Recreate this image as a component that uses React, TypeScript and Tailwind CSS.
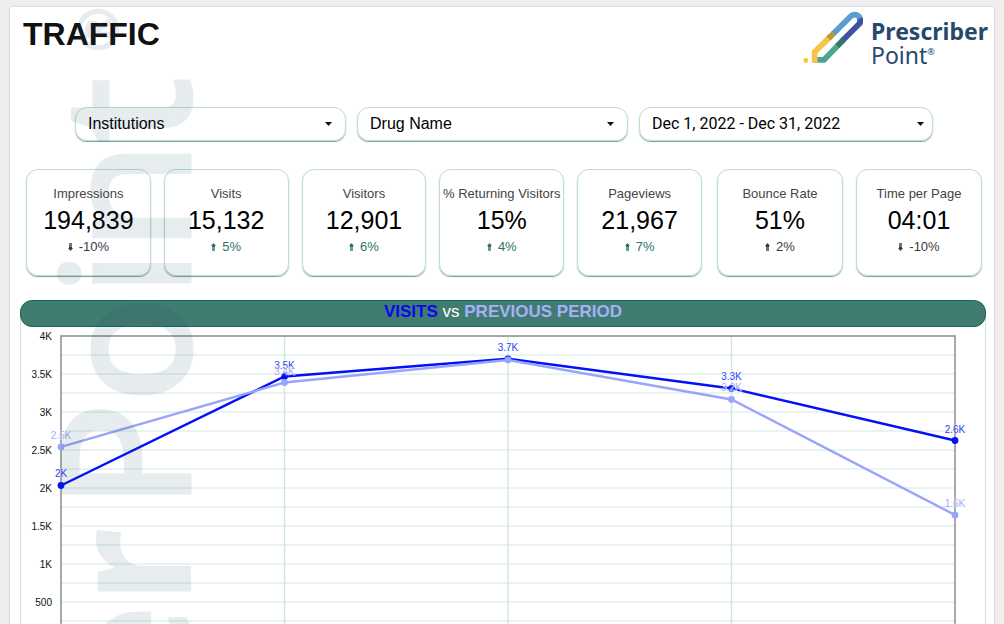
const metrics = [
  { label: "Impressions", value: "194,839", change: "-10%", up: false, good: false },
  { label: "Visits", value: "15,132", change: "5%", up: true, good: true },
  { label: "Visitors", value: "12,901", change: "6%", up: true, good: true },
  { label: "% Returning Visitors", value: "15%", change: "4%", up: true, good: true },
  { label: "Pageviews", value: "21,967", change: "7%", up: true, good: true },
  { label: "Bounce Rate", value: "51%", change: "2%", up: true, good: false },
  { label: "Time per Page", value: "04:01", change: "-10%", up: false, good: false },
];

const visits = [
  { value: 2033, label: "2K" },
  { value: 3467, label: "3.5K" },
  { value: 3700, label: "3.7K" },
  { value: 3310, label: "3.3K" },
  { value: 2625, label: "2.6K" },
];

const previous = [
  { value: 2540, label: "2.5K" },
  { value: 3388, label: "3.4K" },
  { value: 3685, label: "" },
  { value: 3165, label: "3.2K" },
  { value: 1645, label: "1.6K" },
];

const ticks = ["4K", "3.5K", "3K", "2.5K", "2K", "1.5K", "1K", "500", "0"];

// plot area inside the chart svg
const LEFT = 40;
const RIGHT = 934;
const TOP = 9;
const BOTTOM = 313;
const STEP = (RIGHT - LEFT) / 4;

const getX = (i: number) => LEFT + i * STEP;
const getY = (value: number) => BOTTOM - (value / 4000) * (BOTTOM - TOP);

type Point = { value: number; label: string };

const Series = ({ points, color, textColor }: { points: Point[]; color: string; textColor: string }) => (
  <g>
    <polyline
      points={points.map((p, i) => `${getX(i)},${getY(p.value)}`).join(" ")}
      fill="none"
      stroke={color}
      strokeWidth={2.4}
    />
    {points.map((p, i) => (
      <g key={i}>
        <circle cx={getX(i)} cy={getY(p.value)} r={3.4} fill={color} />
        <text
          x={getX(i)}
          y={getY(p.value) - 8}
          textAnchor="middle"
          fill={textColor}
          stroke="#ffffff"
          strokeOpacity={0.5}
          strokeWidth={1.2}
          paintOrder="stroke"
        >
          {p.label}
        </text>
      </g>
    ))}
  </g>
);

const Chart = () => (
  <svg
    viewBox="0 0 964 330"
    className="block w-full h-auto font-['Liberation_Sans',sans-serif] text-[10px]"
    role="img"
    aria-label="Visits vs previous period"
  >
    {Array.from({ length: 17 }, (_, i) => (
      <line key={i} x1={LEFT} x2={RIGHT} y1={TOP + i * 19} y2={TOP + i * 19} stroke="#dff0ec" strokeWidth={1.6} />
    ))}
    {[1, 2, 3].map((i) => (
      <line key={i} x1={getX(i)} x2={getX(i)} y1={TOP} y2={BOTTOM} stroke="#cfe5e0" strokeWidth={1.3} />
    ))}
    <rect x={LEFT} y={TOP} width={RIGHT - LEFT} height={BOTTOM - TOP} fill="none" stroke="#8a8f8e" strokeWidth={1.5} />
    {ticks.map((tick, i) => (
      <text key={tick} x={31} y={TOP + i * 38 + 4} textAnchor="end" fill="#111111">
        {tick}
      </text>
    ))}
    <Series points={visits} color="#0310fa" textColor="#2f43f2" />
    <Series points={previous} color="#98a5fb" textColor="#a3adf7" />
  </svg>
);

const Logo = () => (
  <div className="flex gap-2 text-[#26496a]">
    <svg className="w-[61px] h-[54px] shrink-0" viewBox="802 11 61 54" fill="none" strokeWidth={5.8}>
      <circle cx="805.8" cy="60.5" r="2.4" fill="#f5c63c" />
      <path d="M833 34L850.5 16.5A5.6 5.6 0 0 1 858.8 24.2" stroke="#5b9dcb" />
      <path d="M860 18.5C860.9 21 860.3 23 858.8 24.3L842.3 40.8" stroke="#3b55a2" />
      <path d="M813.5 59.9H824L838.3 45" stroke="#4aa592" />
      <path d="M837.3 46L843.3 39.9" stroke="#347866" />
      <path d="M814.7 62.7V52L829.5 37.4" stroke="#f3c54b" />
      <path d="M828.5 38.4L833.8 33.2" stroke="#b5983f" />
    </svg>
    <div className="font-['Noto_Sans',sans-serif] text-[23px] leading-6 pt-2">
      <div className="font-bold">Prescriber</div>
      <div className="flex">
        Point<span className="text-[9px] leading-[18px]">®</span>
      </div>
    </div>
  </div>
);

const Arrow = ({ up }: { up: boolean }) => (
  <svg className={up ? "w-[5px] h-2" : "w-[5px] h-2 rotate-180"} viewBox="0 0 5 8" fill="currentColor">
    <path d="M2.5 0L5 3H4V4H1V3H0Z" />
    <path d="M1 4H4V8H1Z" opacity={0.7} />
  </svg>
);

const MetricCard = ({ label, value, change, up, good }: (typeof metrics)[number]) => (
  <div className="h-[107px] pt-4 flex flex-col items-center whitespace-nowrap border border-[#bcdcd6] rounded-xl shadow-[0_1px_1px_#7d9f99]">
    <div className="text-[13px] leading-4 text-[#444444]">{label}</div>
    <div className="text-[25px] leading-[37px] text-black">{value}</div>
    <div className={`flex items-center gap-1.5 text-[13px] leading-4 ${good ? "text-[#2b7365]" : "text-[#3a3a3a]"}`}>
      <Arrow up={up} />
      {change}
    </div>
  </div>
);

const Caret = () => (
  <svg className="w-[7px] h-1" viewBox="0 0 7 4">
    <path d="M0 0H7L3.5 4Z" fill="#111111" />
  </svg>
);

const control =
  "w-full h-[34px] pl-3 text-left text-base text-black bg-transparent appearance-none outline-none border border-[#bcdcd6] rounded-xl shadow-[0_1px_1px_#7d9f99]";

const Filter = ({ name }: { name: string }) => (
  <div className="relative">
    <select aria-label={name} className={`block pr-8 ${control}`}>
      <option>{name}</option>
    </select>
    <span className="absolute right-[14px] inset-y-0 flex items-center pointer-events-none">
      <Caret />
    </span>
  </div>
);

const Watermark = () => (
  <svg
    className="absolute left-0 top-0 w-[200px] h-[1400px] pointer-events-none"
    viewBox="0 0 200 1400"
    fill="#234b69"
    stroke="#234b69"
    opacity={0.1}
    aria-hidden="true"
  >
    <g transform="translate(179 502) rotate(-90)" className="font-['Noto_Sans',sans-serif]">
      <text x="-19" y="2" fontSize="170" fontWeight="700" strokeWidth="0" textAnchor="end">
        Prescriber
      </text>
      <text x="0" fontSize="176" strokeWidth="5">
        Point
      </text>
      <text x="457" y="-72" fontSize="54" strokeWidth="2">
        ®
      </text>
    </g>
  </svg>
);

const App = () => {
  return (
    <div className="min-h-screen bg-[#eeeeee] px-[10px] pt-[7px] font-['Liberation_Sans',sans-serif]">
      <main className="relative overflow-hidden bg-white shadow-[0_0_2px_#bbbbbb]">
        <header className="h-[60px] flex justify-between items-start pl-[13px] pr-[6px]">
          <h1 className="pt-2 text-[32px] leading-[38px] font-bold text-[#111111]">TRAFFIC</h1>
          <div className="pt-1">
            <Logo />
          </div>
        </header>

        {/* Filters */}
        <div className="mt-10 pl-[65px] pr-[61px] grid grid-cols-[271fr_271fr_294fr] gap-[11px]">
          <Filter name="Institutions" />
          <Filter name="Drug Name" />
          <button type="button" className={`flex items-center justify-between pr-2 font-['Roboto',sans-serif] ${control}`}>
            Dec 1, 2022 - Dec 31, 2022
            <Caret />
          </button>
        </div>

        {/* Scorecards */}
        <div className="mt-7 pl-4 pr-3 grid grid-cols-[676fr_265fr] gap-[15px]">
          <div className="grid grid-cols-5 gap-[13px]">
            {metrics.slice(0, 5).map((m) => (
              <MetricCard key={m.label} {...m} />
            ))}
          </div>
          <div className="grid grid-cols-2 gap-[13px]">
            {metrics.slice(5).map((m) => (
              <MetricCard key={m.label} {...m} />
            ))}
          </div>
        </div>

        {/* Visits chart */}
        <section className="mt-6 ml-[10px] mr-2">
          <h2 className="relative h-[27px] text-center text-[17px] leading-[22px] font-bold text-[#a5b0f8] bg-[#417c71] border border-[#14695a] rounded-xl">
            <span className="text-[#0808f0]">VISITS</span>
            <span className="font-normal text-white"> vs </span>
            PREVIOUS PERIOD
          </h2>
          <div className="-mt-3 pt-3 border-x border-[#cfe5e0]">
            <Chart />
          </div>
        </section>

        <Watermark />
      </main>
    </div>
  );
};

export default App;
